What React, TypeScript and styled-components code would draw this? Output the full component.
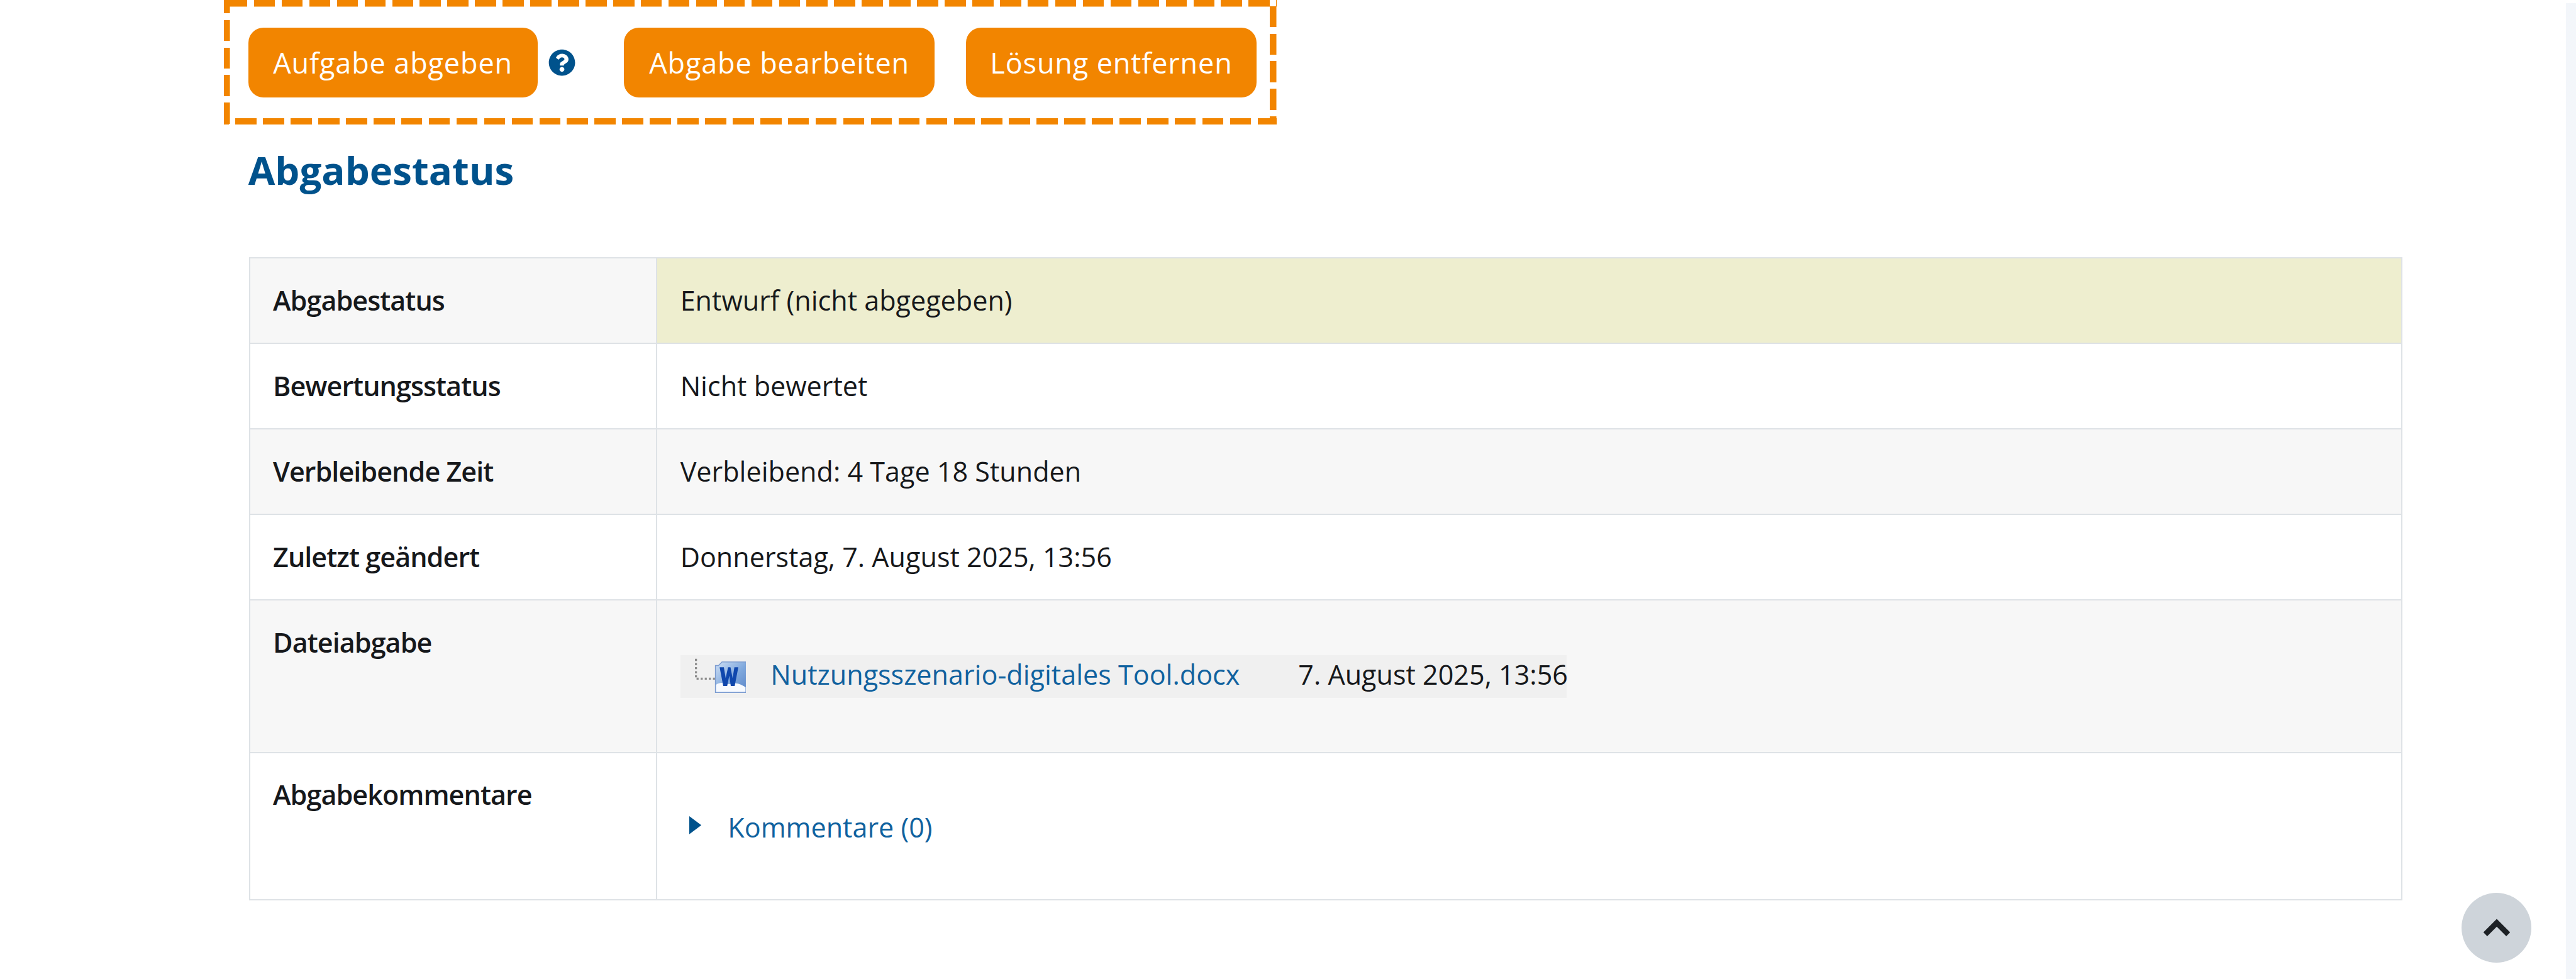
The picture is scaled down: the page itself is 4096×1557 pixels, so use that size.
import React from 'react'
import styled, { createGlobalStyle } from 'styled-components'
import { FaQuestionCircle } from 'react-icons/fa'

const px = (n: number) => `${(n * 0.958).toFixed(2)}px`

const ORANGE = '#f28500'
const BLUE = '#10629f'
const NAVY = '#00528c'
const LINE = '#dee2e6'
const FONT = `'Open Sans', 'Noto Sans', sans-serif`

const GlobalStyle = createGlobalStyle`
  html, body {
    margin: 0;
    padding: 0;
    background: #fff;
    overflow: hidden;
  }
  body {
    font-family: ${FONT};
    color: #16181b;
  }
`

const Page = styled.div`
  position: relative;
  width: 100vw;
  height: 100vh;
  box-sizing: border-box;
  padding-left: ${px(372)};
  padding-right: ${px(17)};
`

const SideStrip = styled.div`
  position: absolute;
  top: ${px(5)};
  right: 0;
  bottom: 0;
  width: ${px(17)};
  background: #f3f6fa;
`

const dashes = (angle: number, offset: number) =>
  `repeating-linear-gradient(${angle}deg, ${ORANGE} ${px(offset)}, ${ORANGE} ${px(offset + 35)}, transparent ${px(offset + 35)}, transparent ${px(offset + 45.86)})`

const HighlightBox = styled.div`
  display: inline-flex;
  align-items: center;
  box-sizing: border-box;
  width: ${px(1747)};
  height: ${px(207)};
  padding: ${px(1)} 0 0 ${px(40)};
  background:
    ${dashes(90, 4.14)} left top / 100% ${px(11)} no-repeat,
    ${dashes(90, 19.14)} left bottom / 100% ${px(11)} no-repeat,
    ${dashes(180, -12.86)} left top / ${px(10)} 100% no-repeat,
    ${dashes(180, 10)} right top / ${px(11)} 100% no-repeat;
`

const OrangeButton = styled.button<{ $width: number; $gap?: number }>`
  width: ${(p) => px(p.$width)};
  height: ${px(116)};
  margin-right: ${(p) => px(p.$gap ?? 0)};
  padding: 0;
  border: 0;
  border-radius: ${px(25)};
  background: ${ORANGE};
  color: #fff;
  font-family: ${FONT};
  font-size: ${px(47)};
  letter-spacing: ${px(0.9)};
  line-height: 1;
`

const HelpIcon = styled.span`
  display: flex;
  width: ${px(45)};
  height: ${px(45)};
  margin: 0 ${px(81)} 0 ${px(18)};
  color: ${NAVY};
  font-size: ${px(45)};
`

const Heading = styled.h3`
  margin: ${px(33)} 0 ${px(103)} ${px(40)};
  color: ${NAVY};
  font-size: ${px(64.5)};
  font-weight: 700;
  line-height: ${px(84)};
`

const StatusTable = styled.div`
  display: grid;
  grid-template-columns: ${px(676)} ${px(2896)};
  margin-left: ${px(41)};
  width: max-content;
  border-top: ${px(3)} solid ${LINE};
  border-left: ${px(3)} solid ${LINE};
  font-size: ${px(45)};
`

const Cell = styled.div<{ $height: number; $shaded?: boolean; $top?: boolean; $tint?: string }>`
  display: flex;
  align-items: ${(p) => (p.$top ? 'flex-start' : 'center')};
  box-sizing: border-box;
  height: ${(p) => px(p.$height)};
  padding: ${(p) => (p.$top ? px(38) : 0)} ${px(38)} 0;
  border-right: ${px(3)} solid ${LINE};
  border-bottom: ${px(3)} solid ${LINE};
  background: ${(p) => p.$tint ?? (p.$shaded ? '#f7f7f7' : '#fff')};
  line-height: ${px(62)};
`

const Label = styled(Cell)`
  font-weight: 600;
  letter-spacing: ${px(-1)};
`

const FileRow = styled.div`
  display: flex;
  flex: none;
  align-items: center;
  width: ${px(1471)};
  height: ${px(71)};
  margin-top: ${px(53)};
  background: #f0f0f0;
  white-space: nowrap;
`

const FileLink = styled.a`
  margin: 0 0 ${px(8)} ${px(41)};
  color: ${BLUE};
`

const FileDate = styled.span`
  margin: 0 0 ${px(8)} ${px(97)};
`

const CommentsToggle = styled.div`
  display: flex;
  align-items: center;
  margin: ${px(54)} 0 0 ${px(15)};
`

const CommentsArrow = styled.svg`
  margin-bottom: ${px(6)};
`

const CommentsLink = styled.a`
  margin-left: ${px(44)};
  color: ${BLUE};
`

const TopButton = styled.div`
  position: absolute;
  right: ${px(74)};
  bottom: ${px(27)};
  display: flex;
  align-items: center;
  justify-content: center;
  width: ${px(116)};
  height: ${px(116)};
  border-radius: 50%;
  background: #ced4da;
`

const WordIconSvg = styled.svg`
  flex: none;
  margin: ${px(-6)} 0 0 ${px(24)};
`

const WordIcon = () => (
  <WordIconSvg width={px(85)} height={px(60)} viewBox="0 0 85 60">
    <path d="M1.7 3V36H34" fill="none" stroke="#8d8d8d" strokeWidth="3.4" strokeDasharray="3.4 3.4" />
    <defs>
      <linearGradient id="wordBg" x1="0" y1="0" x2="1" y2="1">
        <stop offset="0" stopColor="#cfe0f5" />
        <stop offset="0.55" stopColor="#7fa8dd" />
        <stop offset="1" stopColor="#5b86c8" />
      </linearGradient>
    </defs>
    <path d="M39 14L45 8H85V59H34V14Z" fill="url(#wordBg)" stroke="#7b9bd0" strokeWidth="1.5" />
    <path d="M35 46C46 38 54 48 64 44C70 42 78 46 84 50V58H35Z" fill="#f7faff" />
    <path d="M41 17H48L51 35L55 17H59L62.5 35L65.5 17H72L66 48H59.5L57 31L53.5 48H47Z" fill="#0f47ad" />
  </WordIconSvg>
)

export default function App(): React.ReactElement {
  return (
    <Page>
      <GlobalStyle />
      <HighlightBox>
        <OrangeButton $width={480}>Aufgabe abgeben</OrangeButton>
        <HelpIcon>
          <FaQuestionCircle />
        </HelpIcon>
        <OrangeButton $width={515} $gap={52}>Abgabe bearbeiten</OrangeButton>
        <OrangeButton $width={483}>Lösung entfernen</OrangeButton>
      </HighlightBox>
      <Heading>Abgabestatus</Heading>
      <StatusTable>
        <Label $height={142} $shaded>Abgabestatus</Label>
        <Cell $height={142} $tint="#eeeecf">Entwurf (nicht abgegeben)</Cell>
        <Label $height={142}>Bewertungsstatus</Label>
        <Cell $height={142}>Nicht bewertet</Cell>
        <Label $height={142} $shaded>Verbleibende Zeit</Label>
        <Cell $height={142} $shaded>Verbleibend: 4 Tage 18 Stunden</Cell>
        <Label $height={142}>Zuletzt geändert</Label>
        <Cell $height={142}>Donnerstag, 7. August 2025, 13:56</Cell>
        <Label $height={253} $shaded $top>Dateiabgabe</Label>
        <Cell $height={253} $shaded $top>
          <FileRow>
            <WordIcon />
            <FileLink>Nutzungsszenario-digitales Tool.docx</FileLink>
            <FileDate>7. August 2025, 13:56</FileDate>
          </FileRow>
        </Cell>
        <Label $height={245} $top>Abgabekommentare</Label>
        <Cell $height={245} $top>
          <CommentsToggle>
            <CommentsArrow width={px(20)} height={px(30)} viewBox="0 0 20 30">
              <path d="M0 0L20 15L0 30Z" fill={NAVY} />
            </CommentsArrow>
            <CommentsLink>Kommentare (0)</CommentsLink>
          </CommentsToggle>
        </Cell>
      </StatusTable>
      <TopButton>
        <svg width={px(48)} height={px(32)} viewBox="0 0 48 32">
          <path d="M5 27L24 8L43 27" fill="none" stroke="#1d2125" strokeWidth="9" strokeLinejoin="miter" />
        </svg>
      </TopButton>
      <SideStrip />
    </Page>
  )
}
